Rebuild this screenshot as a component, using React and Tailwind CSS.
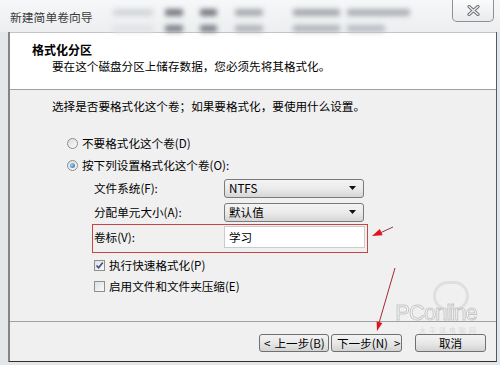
import React from 'react';

const cn = "font-['SimSun','Noto_Sans_CJK_SC',sans-serif]";

const Radio = ({ checked }) => (
  <span className="w-[11px] h-[11px] rounded-full border border-[#8d8d8d] bg-gradient-to-br from-[#dcdcdc] to-[#fbfbfb] flex items-center justify-center">
    {checked && (
      <span className="w-[5px] h-[5px] rounded-full bg-[radial-gradient(circle_at_35%_35%,#9fd0f5,#2a64a8)]" />
    )}
  </span>
);

const Checkbox = ({ checked }) => (
  <span className="w-[11px] h-[11px] border border-[#8e8f8f] bg-gradient-to-br from-[#e0e0e0] to-[#fafafa] flex items-center justify-center">
    {checked && (
      <svg width="9" height="9" viewBox="0 0 9 9">
        <path d="M1.5 4.5 L3.6 6.8 L7.8 1.6" fill="none" stroke="#3b4f86" strokeWidth="1.6" />
      </svg>
    )}
  </span>
);

const Select = ({ value }) => (
  <div className="w-[140px] h-[19px] border border-[#7a7a7a] rounded-[3px] bg-gradient-to-b from-[#f4f4f4] via-[#ebebeb] to-[#d6d6d6] flex items-center pl-[4px] pr-[7px]">
    <span className="text-[11.6px] leading-[16px] text-black">{value}</span>
    <svg className="ml-auto" width="7" height="4" viewBox="0 0 7 4">
      <path d="M0 0 H7 L3.5 4 Z" fill="#111" />
    </svg>
  </div>
);

const Button = ({ children, width }) => (
  <div
    className={`h-[18px] border border-[#707070] rounded-[3px] bg-gradient-to-b from-[#f3f3f3] via-[#e8e8e8] to-[#d3d3d3] flex items-center text-[11.6px] leading-[16px] text-black ${width}`}
  >
    {children}
  </div>
);

const Blob = ({ w, ml, tone }) => (
  <span className={`h-[7px] blur-[2.5px] rounded-[2px] ${tone} ${w} ${ml}`} />
);

export default function App() {
  return (
    <div className={`w-[500px] h-[365px] overflow-hidden relative flex flex-col bg-[#e4e7ea] ${cn}`}>
      {/* title bar */}
      <div className="h-[32px] flex items-start bg-gradient-to-b from-[#f6f7f8] to-[#eceef0]">
        <span className="pl-[10px] pt-[9px] text-[11.8px] leading-[16px] text-[#3a3a3a] whitespace-nowrap">新建简单卷向导</span>
        <div className="flex flex-col gap-[9px] pt-[9px] ml-[20px]">
          <div className="flex">
            <Blob w="w-[40px]" ml="ml-0" tone="bg-[#d3d6da]" />
            <Blob w="w-[18px]" ml="ml-[12px]" tone="bg-[#767a81]" />
            <Blob w="w-[17px]" ml="ml-[17px]" tone="bg-[#767a81]" />
            <Blob w="w-[28px]" ml="ml-[18px]" tone="bg-[#a8acb2]" />
            <Blob w="w-[47px]" ml="ml-[30px]" tone="bg-[#a5a9af]" />
            <Blob w="w-[63px]" ml="ml-[7px]" tone="bg-[#adb1b6]" />
          </div>
          <div className="flex">
            <Blob w="w-[40px]" ml="ml-0" tone="bg-[#e1e3e6]" />
            <Blob w="w-[18px]" ml="ml-[12px]" tone="bg-[#80848b]" />
            <Blob w="w-[17px]" ml="ml-[17px]" tone="bg-[#80848b]" />
            <Blob w="w-[28px]" ml="ml-[18px]" tone="bg-[#b1b5ba]" />
            <Blob w="w-[47px]" ml="ml-[30px]" tone="bg-[#b2b6bb]" />
            <Blob w="w-[38px]" ml="ml-[7px]" tone="bg-[#bbbfc4]" />
          </div>
        </div>
        <div className="ml-auto mr-[6px] w-[42px] h-[22px] border border-t-0 border-[#8d9094] rounded-b-[5px] bg-gradient-to-b from-[#fbfbfb] to-[#e9ebee] flex items-center justify-center">
          <svg width="13" height="11" viewBox="0 0 13 11">
            <path d="M2 1.5 L11 9.5 M11 1.5 L2 9.5" stroke="#6c7075" strokeWidth="3.2" strokeLinecap="round" />
            <path d="M2 1.5 L11 9.5 M11 1.5 L2 9.5" stroke="#f3f4f5" strokeWidth="1.2" strokeLinecap="round" />
          </svg>
        </div>
      </div>

      {/* window body */}
      <div className="flex-1 flex pl-[8px] pr-[3px] pb-[3px]">
        <div className="flex-1 flex flex-col border-l-2 border-l-[#858585] border-r border-r-[#4d5a6e] border-b border-b-[#2e2e2e]">
          {/* header */}
          <div className="h-[58px] bg-white border-t border-t-[#c4c4c4] border-b border-b-[#a0a0a0] pl-[22px] pt-[9px]">
            <div className="text-[12px] leading-[16px] font-bold text-black">格式化分区</div>
            <div className="pl-[20px] text-[11.6px] leading-[16px] text-black">要在这个磁盘分区上储存数据，您必须先将其格式化。</div>
          </div>

          {/* content */}
          <div className="flex-1 bg-[#f0f0f0] flex flex-col text-[11.6px] leading-[16px] text-black">
            <div className="pl-[42px] pt-[8px]">选择是否要格式化这个卷；如果要格式化，要使用什么设置。</div>

            <div className="mt-[18px] pl-[57px] h-[22px] flex items-center gap-[4px]">
              <Radio />
              <span>不要格式化这个卷(D)</span>
            </div>
            <div className="pl-[57px] h-[22px] flex items-center gap-[4px]">
              <Radio checked />
              <span>按下列设置格式化这个卷(O):</span>
            </div>

            <div className="ml-[82px] w-[276px] mt-[1px] h-[22px] border border-transparent pl-[1px] flex items-center">
              <span className="w-[130px]">文件系统(F):</span>
              <Select value="NTFS" />
            </div>
            <div className="ml-[82px] w-[276px] mt-[2px] h-[22px] border border-transparent pl-[1px] flex items-center">
              <span className="w-[130px]">分配单元大小(A):</span>
              <Select value="默认值" />
            </div>
            <div className="ml-[82px] w-[276px] mt-[1px] h-[29px] border border-[#c54545] pl-[1px] pt-[1px] flex items-start">
              <span className="w-[130px] mt-[3px]">卷标(V):</span>
              <div className="w-[141px] h-[22px] bg-white border border-[#c9cbd0] pl-[4px] flex items-center">学习</div>
            </div>

            <div className="ml-[84px] mt-[2px] h-[20px] flex items-center gap-[4px]">
              <Checkbox checked />
              <span>执行快速格式化(P)</span>
            </div>
            <div className="ml-[84px] mt-[1px] h-[20px] flex items-center gap-[4px]">
              <Checkbox />
              <span>启用文件和文件夹压缩(E)</span>
            </div>

            <div className="mt-auto h-[40px] border-t border-t-[#a0a0a0] flex justify-end items-start pt-[12px] pr-[10px]">
              <Button width="w-[70px] pl-[4px] gap-[4px]">
                <span>&lt;</span>
                <span>上一步(B)</span>
              </Button>
              <Button width="w-[71px] ml-[2px] pl-[5px] gap-[6px]">
                <span>下一步(N)</span>
                <span>&gt;</span>
              </Button>
              <Button width="w-[71px] ml-[13px] justify-center">
                <span>取消</span>
              </Button>
            </div>
          </div>
        </div>
      </div>

      {/* watermark */}
      <div className="absolute left-[386px] top-[281px] w-[100px] h-[54px] pointer-events-none flex flex-col items-center opacity-70">
        <span className="w-[36px] h-[30px] rounded-full border-[3px] border-[#d8d8d8] ml-[30px]" />
        <span className="-mt-[9px] text-[22px] leading-[22px] font-['Liberation_Sans',sans-serif] text-white [-webkit-text-stroke:1px_#b5b5b5] tracking-[-1px]">PConline</span>
        <span className="mt-[2px] text-[7px] leading-[8px] text-[#cfcfcf] tracking-[3px] ml-[26px]">太平洋电脑网</span>
      </div>

      {/* red arrows */}
      <svg className="absolute left-0 top-0 pointer-events-none" width="500" height="365" viewBox="0 0 500 365">
        <line x1="393" y1="227" x2="380" y2="233" stroke="#8f3a48" strokeWidth="1" />
        <polygon points="372,236 382.6,235.3 379.8,228.9" fill="#e0141c" />
        <line x1="395" y1="268" x2="379" y2="323" stroke="#a52a35" strokeWidth="1" />
        <polygon points="377,331 382.4,323.1 376.6,321.5" fill="#e0141c" />
      </svg>
    </div>
  );
}
